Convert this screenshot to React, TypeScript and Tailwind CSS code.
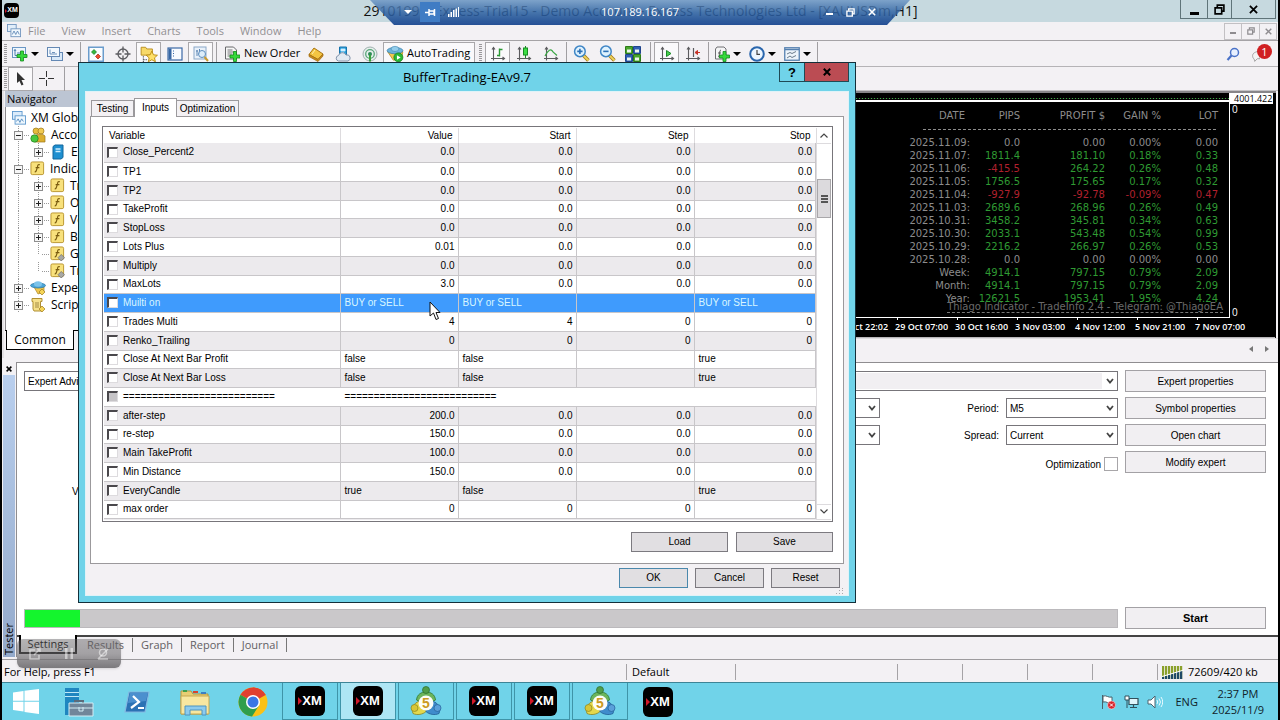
import type { ReactNode } from "react";
import clsx from "clsx";

type InputRow = {
  name: string;
  cells: [string, string, string, string];
  text?: boolean;
  selected?: boolean;
  disabled?: boolean;
};

const zeros = (name: string, value = "0.0"): InputRow => ({ name, cells: [value, "0.0", "0.0", "0.0"] });
const divider = "=".repeat(26);

const inputRows: InputRow[] = [
  zeros("Close_Percent2"),
  zeros("TP1"),
  zeros("TP2"),
  zeros("TakeProfit"),
  zeros("StopLoss"),
  zeros("Lots Plus", "0.01"),
  zeros("Multiply"),
  zeros("MaxLots", "3.0"),
  { name: "Muilti on", cells: ["BUY or SELL", "BUY or SELL", "", "BUY or SELL"], text: true, selected: true },
  { name: "Trades Multi", cells: ["4", "4", "0", "0"] },
  { name: "Renko_Trailing", cells: ["0", "0", "0", "0"] },
  { name: "Close At Next Bar Profit", cells: ["false", "false", "", "true"], text: true },
  { name: "Close At Next Bar Loss", cells: ["false", "false", "", "true"], text: true },
  { name: divider, cells: [divider, "", "", ""], text: true, disabled: true },
  zeros("after-step", "200.0"),
  zeros("re-step", "150.0"),
  zeros("Main TakeProfit", "100.0"),
  zeros("Min Distance", "150.0"),
  { name: "EveryCandle", cells: ["true", "false", "", "true"], text: true },
  { name: "max order", cells: ["0", "0", "0", "0"] },
];

const stats = [
  ["2025.11.09:", "0.0", "0.00", "0.00%", "0.00"],
  ["2025.11.07:", "1811.4", "181.10", "0.18%", "0.33"],
  ["2025.11.06:", "-415.5", "264.22", "0.26%", "0.48"],
  ["2025.11.05:", "1756.5", "175.65", "0.17%", "0.32"],
  ["2025.11.04:", "-927.9", "-92.78", "-0.09%", "0.47"],
  ["2025.11.03:", "2689.6", "268.96", "0.26%", "0.49"],
  ["2025.10.31:", "3458.2", "345.81", "0.34%", "0.63"],
  ["2025.10.30:", "2033.1", "543.48", "0.54%", "0.99"],
  ["2025.10.29:", "2216.2", "266.97", "0.26%", "0.53"],
  ["2025.10.28:", "0.0", "0.00", "0.00%", "0.00"],
  ["Week:", "4914.1", "797.15", "0.79%", "2.09"],
  ["Month:", "4914.1", "797.15", "0.79%", "2.09"],
  ["Year:", "12621.5", "1953.41", "1.95%", "4.24"],
];

const statColor = (row: string[], index: number) => {
  if (index === 0 || row[1] === "0.0") return "text-[#8c8c8c]";
  if (row[index].startsWith("-") || (index === 4 && row[2].startsWith("-"))) return "text-[#b0202e]";
  return "text-[#2f9a33]";
};

const timeAxis = ["28 Oct 22:02", "29 Oct 07:00", "30 Oct 16:00", "3 Nov 03:00", "4 Nov 12:00", "5 Nov 21:00", "7 Nov 07:00"];

/* ---------- toolbar icons, all on a 16px grid ---------- */

const Svg = ({ children, size = 16 }: { children: ReactNode; size?: number }) => (
  <svg width={size} height={size} viewBox="0 0 16 16" fill="none" className="shrink-0" aria-hidden="true">
    {children}
  </svg>
);

const Plus = ({ x = 10, y = 10 }) => (
  <path
    d={`M${x - 1.5} ${y - 5}h3v3.5h3.5v3h-3.5v3.5h-3v-3.5h-3.5v-3h3.5z`}
    fill="#35d83a"
    stroke="#128a1c"
    strokeWidth=".8"
  />
);

const NewChartIcon = () => (
  <Svg>
    <rect x=".5" y="1.5" width="13" height="10" fill="#eef6fd" stroke="#6a96c4" />
    <path d="M3 3.5v6h8M2 5l1-1.500 1 1.500M5 7h5" stroke="#4d7eb0" />
    <Plus x={10} y={10} />
  </Svg>
);
const WindowsIcon = () => (
  <Svg>
    <rect x="4.500" y="6.500" width="11" height="8" fill="#d7e8f8" stroke="#6488b4" />
    <rect x=".5" y="1.500" width="12" height="9" fill="#f2f8fe" stroke="#6488b4" />
    <path d="M3 3.500v4.500h7M5 6.500h3" stroke="#6e93bd" />
  </Svg>
);
const MarketIcon = () => (
  <Svg>
    <rect x=".75" y="1.250" width="14.500" height="14" fill="#fbfdff" stroke="#6a9ccc" strokeWidth="1.500" />
    <path d="M6 3.500l2.500 2.500L6 8.500 3.500 6z" fill="#33b83c" stroke="#177a20" strokeWidth=".7" />
    <path d="M10 8l2.500 2.500L10 13l-2.500-2.500z" fill="#ee4a2c" stroke="#a52510" strokeWidth=".7" />
  </Svg>
);
const TargetIcon = () => (
  <Svg>
    <circle cx="8" cy="8" r="5" stroke="#5c5c60" strokeWidth="1.300" />
    <path d="M8 .5v6M8 9.500v6M.5 8h6M9.500 8h6" stroke="#5c5c60" strokeWidth="1.300" />
  </Svg>
);
const FavoriteIcon = () => (
  <Svg size={18}>
    <path d="M1 2h4l1 1.500h5V9H1z" fill="#f7d968" stroke="#b58a1c" strokeWidth=".8" />
    <path d="M3 10v5M3 13h3" stroke="#555" strokeDasharray="1 1" />
    <path d="M10.500 5.500l1.500 3.200 3.500.4-2.600 2.300.8 3.500-3.200-1.800-3.100 1.800.7-3.500L5.500 9.100l3.500-.4z" fill="#ffe169" stroke="#b98a10" strokeWidth=".8" />
  </Svg>
);
const DataIcon = () => (
  <Svg>
    <rect x="1" y="2" width="14" height="12" fill="#f8fbff" stroke="#3c69a5" strokeWidth="1.200" />
    <path d="M1.500 2.500h3v11h-3z" fill="#3767a4" />
    <path d="M6 5h1M6 7.500h1M6 10h1" stroke="#3767a4" />
  </Svg>
);
const TesterIcon = () => (
  <Svg>
    <rect x="1" y="1" width="12" height="12" fill="#e9f1fa" stroke="#8aa8c8" />
    <path d="M4 4v6M3 5h2M6.500 3v5" stroke="#5c86b4" />
    <circle cx="9" cy="8" r="3.500" fill="#d9ecfa" fillOpacity=".8" stroke="#5d8dbd" />
    <path d="M11.500 11l3.500 4" stroke="#c89a30" strokeWidth="2" />
  </Svg>
);
const OrderIcon = () => (
  <Svg>
    <path d="M1.500 1h8l3 3v9h-11z" fill="#f6f6f6" stroke="#68686c" />
    <path d="M3.500 4h5M3.500 6h7M3.500 8h5M3.500 10h3" stroke="#77777b" />
    <Plus x={11} y={10.5} />
  </Svg>
);
const GoldIcon = () => (
  <Svg>
    <path d="M1 8.500L6 2l9 6-5 5.500z" fill="#f4c542" stroke="#a97514" />
    <path d="M1 8.500v2l9 5 5-5.500V8l-5 5.500z" fill="#c98e1c" stroke="#a06a10" strokeWidth=".7" />
    <path d="M4 8l3-4" stroke="#fff0b0" />
  </Svg>
);
const CloudIcon = () => (
  <Svg>
    <path d="M4.500 1h7v8h-7z" fill="#2ca0dc" stroke="#1673ac" />
    <path d="M6 3h4v2H6zM6 6.500h3" fill="#d6f0ff" stroke="#d6f0ff" strokeWidth=".8" />
    <path d="M3.500 15a2.800 2.800 0 010-5.500 4 4 0 017.500-.5 3 3 0 012 6z" fill="#e2e9f2" stroke="#8494ac" />
  </Svg>
);
const SignalIcon = () => (
  <Svg>
    <circle cx="8" cy="8" r="7" fill="#e6efec" stroke="#9fb0ae" />
    <circle cx="8" cy="8" r="4.300" stroke="#5aa579" strokeWidth="1.300" />
    <circle cx="8" cy="8" r="2" fill="#2f8b59" />
    <path d="M8 9v6.500" stroke="#39a338" strokeWidth="2" />
  </Svg>
);
const AutoIcon = () => (
  <Svg size={18}>
    <path d="M1.500 6l5 7.500 7-1L15 6z" fill="#f4c950" stroke="#b88a1e" strokeWidth=".7" />
    <ellipse cx="8" cy="5" rx="7" ry="2.800" fill="#6bb4dc" stroke="#3a80ac" strokeWidth=".7" />
    <ellipse cx="8" cy="3.500" rx="3.500" ry="2.300" fill="#92cdec" stroke="#3a80ac" strokeWidth=".5" />
    <circle cx="11" cy="11" r="4" fill="#2bb835" stroke="#15801c" strokeWidth=".7" />
    <path d="M9.700 9l3.300 2-3.300 2z" fill="#fff" />
  </Svg>
);
const Axes = () => <path d="M3.500 2v12.500M1 12.500h13M2 3.500l1.500-2L5 3.500M12.500 11l2 1.500-2 1.500" stroke="#5b5b5e" strokeWidth="1.100" />;
const BarsIcon = () => (
  <Svg>
    <Axes />
    <path d="M9.500 2.500v8M9.500 3.500h3M7 9.500h2.500" stroke="#2b9a35" strokeWidth="1.400" />
  </Svg>
);
const CandlesIcon = () => (
  <Svg>
    <Axes />
    <path d="M9.500 0v12" stroke="#188c22" />
    <rect x="7.500" y="2" width="4" height="7" fill="#3ddd46" stroke="#188c22" />
  </Svg>
);
const LineIcon = () => (
  <Svg>
    <Axes />
    <path d="M2 10c3-6 6-8 8-4l4 3.500" stroke="#3aa544" strokeWidth="1.200" />
  </Svg>
);
const ZoomIcon = ({ plus = false }) => (
  <Svg size={17}>
    <path d="M9.500 9.500l5 5" stroke="#a87e1c" strokeWidth="3.400" />
    <path d="M10 10l4.500 4.500" stroke="#eed45c" strokeWidth="1.800" />
    <circle cx="6.500" cy="6" r="5" fill="#dff2fe" stroke="#3f86c6" strokeWidth="1.400" />
    <path d={plus ? "M4 6h5M6.500 3.500v5" : "M4 6h5"} stroke="#2c70b6" strokeWidth="1.500" />
  </Svg>
);
const TileIcon = () => (
  <Svg>
    <path d="M.5.500h7v7h-7zM8.500 8.500h7v7h-7z" fill="#4aa62c" stroke="#2c7a18" />
    <path d="M8.500.500h7v7h-7zM.5 8.500h7v7h-7z" fill="#2f5fb4" stroke="#20448c" />
    <path d="M2 3.500h4v3H2zM10 3.500h4v3h-4zM2 11.500h4v3H2zM10 11.500h4v3h-4z" fill="#eef6ee" />
  </Svg>
);
const ScrollIcon = () => (
  <Svg>
    <Axes />
    <path d="M7.500 4.500l4.500 3-4.500 3z" fill="#46cf4c" stroke="#1c8a26" />
  </Svg>
);
const ShiftIcon = () => (
  <Svg>
    <Axes />
    <path d="M8.500 2v9" stroke="#5b5b5e" strokeWidth="1.200" />
    <path d="M15 6.500h-4M12.500 4.500l-2.500 2 2.500 2z" fill="#c73226" stroke="#c73226" />
  </Svg>
);
const IndicatorIcon = () => (
  <Svg>
    <path d="M3 1h7l2 2v10H1.500V3z" fill="#f5f5f6" stroke="#707074" />
    <path d="M7 4c-2 0-1 7-3 7M4 7h3" stroke="#555" />
    <Plus x={10.5} y={10.5} />
  </Svg>
);
const ClockIcon = () => (
  <Svg>
    <circle cx="8" cy="8" r="6.800" fill="#edf6ff" stroke="#2a66ad" strokeWidth="2" />
    <path d="M8 4v4.300h3" stroke="#444" strokeWidth="1.200" />
  </Svg>
);
const TemplateIcon = () => (
  <Svg>
    <rect x=".75" y="1.750" width="14.500" height="12.500" fill="#eef4fa" stroke="#5580b0" strokeWidth="1.300" />
    <path d="M1 3.500h14" stroke="#5580b0" strokeWidth="1.500" />
    <path d="M3 8l3-1.500 2 1 4-2M3 12l3-2 2 1.500 4-2" stroke="#6a7b8c" />
  </Svg>
);

const Caret = ({ light }: { light?: boolean }) => (
  <span className={clsx("border-x-4 border-t-4 border-x-transparent", light ? "border-t-white" : "border-t-black")} />
);
const Grip = () => <span className="h-5 w-[3px] shrink-0 bg-[repeating-linear-gradient(#9a989b_0_1px,#f3f1f4_1px_2px)]" />;
const Sep = ({ className }: { className: string }) => (
  <span className={clsx("flex shrink-0 justify-center", className)}>
    <span className="h-6 w-px bg-[#a09ea1]" />
  </span>
);

const ToolButton = ({ label, pressed, narrow, children }: { label: string; pressed?: boolean; narrow?: boolean; children: ReactNode }) => (
  <button
    type="button"
    aria-label={label}
    className={clsx(
      "flex h-6 shrink-0 items-center justify-center",
      pressed ? "w-[25px] border border-[#a9a7aa] bg-[#faf9fb]" : narrow ? "w-[26px]" : "w-[27px]",
    )}
  >
    {children}
  </button>
);

const DropButton = ({ label, children }: { label: string; children: ReactNode }) => (
  <button type="button" aria-label={label} className="flex h-6 w-[35px] shrink-0 items-center gap-[3px] pl-1">
    {children}
    <Caret />
  </button>
);

/* ---------- main window ---------- */

const MinGlyph = () => <span className="mt-2 h-[3px] w-[9px] bg-black" />;
const RestoreGlyph = ({ color = "#000", size = 11 }) => (
  <svg width={size} height={size} viewBox="0 0 10 10" fill="none" stroke={color} strokeWidth="1.500" aria-hidden="true">
    <path d="M3 3V1h6v5.500H7" />
    <path d="M1 3.500h6V9H1z" />
  </svg>
);
const CloseGlyph = ({ color = "#000", size = 9, weight = 2 }) => (
  <svg width={size} height={size} viewBox="0 0 10 10" stroke={color} strokeWidth={weight} aria-hidden="true">
    <path d="M1 1l8 8M9 1L1 9" />
  </svg>
);

const TitleBar = () => (
  <header className="relative flex h-[22px] shrink-0 items-start bg-[#c6d9df]">
    <XmLogo small />
    <h1 className="flex-1 self-center pr-4 text-center font-['Open_Sans',sans-serif] text-[14px] leading-5 whitespace-nowrap text-[#111]">
      29101990: Exness-Trial15 - Demo Account - Exness Technologies Ltd - [XAUUSDm,H1]
    </h1>
    <div className="absolute top-0 right-[2px] flex h-[19px] border border-t-0 border-[#5f7479]">
      <button type="button" aria-label="Minimize" className="flex w-[27px] items-center justify-center border-r border-[#5f7479]"><MinGlyph /></button>
      <button type="button" aria-label="Restore" className="flex w-6 items-center justify-center border-r border-[#5f7479]"><RestoreGlyph /></button>
      <button type="button" aria-label="Close" className="flex w-[43px] items-center justify-center"><CloseGlyph /></button>
    </div>
  </header>
);

const MenuBar = () => (
  <nav className="flex h-[19px] shrink-0 items-center border-b border-[#a5a3a6] bg-[#f3f1f4] pl-[5px] text-[#929093]">
    <Svg size={14}>
      <rect x=".5" y=".5" width="10" height="8" fill="#e2eefa" stroke="#6f93bd" />
      <rect x="4.500" y="5.500" width="11" height="9" fill="#f0f7fd" stroke="#6f93bd" />
      <path d="M6 12l2-4 2 4 2-4 2 4" stroke="#5f87b5" />
    </Svg>
    <div className="flex flex-1 gap-4 pl-[7px] text-[11px] leading-4">
      {["File", "View", "Insert", "Charts", "Tools", "Window", "Help"].map((item) => (
        <button key={item} type="button">{item}</button>
      ))}
    </div>
    <div className="mr-px flex h-[17px] border border-[#c2c0c3]">
      <button type="button" aria-label="Minimize chart" className="flex w-[17px] items-center justify-center border-r border-[#c2c0c3]">
        <span className="mt-1 h-[2px] w-[6px] bg-[#8e8c8f]" />
      </button>
      <button type="button" aria-label="Restore chart" className="flex w-[18px] items-center justify-center border-r border-[#c2c0c3]"><RestoreGlyph color="#8e8c8f" size={8} /></button>
      <button type="button" aria-label="Close chart" className="flex w-4 items-center justify-center"><CloseGlyph color="#8e8c8f" size={7} /></button>
    </div>
  </nav>
);

const Toolbars = () => (
  <div className="shrink-0 bg-[#f3f1f4]">
    <div className="flex h-[26px] items-center border-b border-[#b5b3b6]">
      <div className="flex w-[6px] justify-center"><Grip /></div>
      <DropButton label="New chart"><NewChartIcon /></DropButton>
      <DropButton label="Profiles"><WindowsIcon /></DropButton>
      <Sep className="w-1" />
      <ToolButton label="Market watch"><MarketIcon /></ToolButton>
      <ToolButton label="Data window"><TargetIcon /></ToolButton>
      <ToolButton label="Navigator" pressed><FavoriteIcon /></ToolButton>
      <ToolButton label="Terminal"><DataIcon /></ToolButton>
      <ToolButton label="Strategy tester" pressed><TesterIcon /></ToolButton>
      <Sep className="w-[7px]" />
      <button type="button" className="flex h-6 w-[82px] shrink-0 items-center gap-1 pl-1 text-[11px] whitespace-nowrap">
        <OrderIcon />
        New Order
      </button>
      <ToolButton label="MetaEditor"><GoldIcon /></ToolButton>
      <ToolButton label="Hosting"><CloudIcon /></ToolButton>
      <ToolButton label="Signals"><SignalIcon /></ToolButton>
      <button type="button" className="flex h-6 w-[92px] shrink-0 items-center gap-[3px] border border-[#a9a7aa] bg-[#faf9fb] pl-[2px] text-[11px]">
        <AutoIcon />
        AutoTrading
      </button>
      <div className="flex w-[10px] justify-center"><Grip /></div>
      <ToolButton label="Bar chart" pressed><BarsIcon /></ToolButton>
      <ToolButton label="Candlesticks"><CandlesIcon /></ToolButton>
      <ToolButton label="Line chart"><LineIcon /></ToolButton>
      <Sep className="w-1" />
      <ToolButton label="Zoom in" narrow><ZoomIcon plus /></ToolButton>
      <ToolButton label="Zoom out" narrow><ZoomIcon /></ToolButton>
      <ToolButton label="Tile windows" narrow><TileIcon /></ToolButton>
      <Sep className="w-2" />
      <ToolButton label="Auto scroll" pressed><ScrollIcon /></ToolButton>
      <ToolButton label="Chart shift"><ShiftIcon /></ToolButton>
      <Sep className="w-1" />
      <DropButton label="Indicators"><IndicatorIcon /></DropButton>
      <DropButton label="Periods"><ClockIcon /></DropButton>
      <DropButton label="Templates"><TemplateIcon /></DropButton>
      <Sep className="w-1" />
      <div className="ml-auto flex items-center gap-3 pr-[6px]">
        <button type="button" aria-label="Search">
          <svg width="14" height="14" viewBox="0 0 14 14" fill="none" aria-hidden="true">
            <circle cx="8.500" cy="5.500" r="4" fill="#e8f0ff" stroke="#4a72c8" strokeWidth="1.500" />
            <path d="M5.500 8.500l-4 4.500" stroke="#4a72c8" strokeWidth="2.200" />
          </svg>
        </button>
        <button type="button" aria-label="Notifications" className="flex items-end">
          <svg width="8" height="13" viewBox="0 0 9 13" className="-mr-[3px]" aria-hidden="true">
            <path d="M6 1C1 2 0 5 1 7.500c1 2 2 2 2 4.500l3-3h3V1z" fill="#f4f4f4" stroke="#9b9b9b" />
          </svg>
          <span className="mb-1 size-[15px] rounded-full bg-[#d02022] text-center text-[11px] leading-[15px] text-white">1</span>
        </button>
      </div>
    </div>
    <div className="flex h-6 items-center border-b border-[#c5c3c6]">
      <div className="flex w-[6px] justify-center"><Grip /></div>
      <ToolButton label="Cursor" pressed>
        <svg width="10" height="14" viewBox="0 0 10 14" aria-hidden="true">
          <path d="M1 0v11l2.500-2 2 4.500 2-1L5.500 8H9z" fill="#333" />
        </svg>
      </ToolButton>
      <ToolButton label="Crosshair">
        <svg width="15" height="15" viewBox="0 0 15 15" stroke="#333" aria-hidden="true">
          <path d="M7.500 0v6M7.500 9v6M0 7.500h6M9 7.500h6" />
        </svg>
      </ToolButton>
      <Sep className="w-2" />
    </div>
  </div>
);

/* ---------- navigator ---------- */

const FnIcon = ({ script = false }) => (
  <Svg size={15}>
    <rect x="1" y="1" width="13.500" height="13.500" rx="1.500" fill="#f8e17c" stroke="#b9932c" />
    <path d="M10.500 4c-3-1-2 2-3 4s-.5 4-2.500 3.500M6 7h4" stroke="#7a5c10" strokeWidth="1.200" />
    {script && <path d="M12 9l3.500 3.500L12 16l-3.500-3.500z" fill="#a8a8a4" stroke="#666" strokeWidth=".7" />}
  </Svg>
);
const AccountsIcon = () => (
  <Svg>
    <circle cx="6" cy="4" r="3" fill="#e6bc3c" stroke="#9b761a" strokeWidth=".7" />
    <circle cx="11" cy="4" r="3" fill="#f1cb52" stroke="#9b761a" strokeWidth=".7" />
    <path d="M5 15V9c2-2.500 8-2.500 10 0v6z" fill="#dcae2e" stroke="#9b761a" strokeWidth=".7" />
    <circle cx="4.500" cy="11.500" r="3.700" fill="#49c83e" stroke="#23801e" strokeWidth=".7" />
  </Svg>
);
const ServerIcon = () => (
  <Svg>
    <path d="M3 2.500L5 1h8v12.500L11 15H3z" fill="#1f8fd0" stroke="#12669c" />
    <path d="M5.500 5h5M5.500 7.500h5" stroke="#cdeeff" strokeWidth="1.300" />
  </Svg>
);
const ExpertsIcon = () => (
  <Svg>
    <path d="M4 7l4 7 6-2V7z" fill="#f1c84c" stroke="#ad8424" strokeWidth=".7" />
    <ellipse cx="8" cy="5.500" rx="7.500" ry="2.500" fill="#4ba5d8" stroke="#2a75a5" strokeWidth=".7" />
    <ellipse cx="8" cy="4" rx="4" ry="2.700" fill="#7cc3ea" />
    <path d="M12 9l3 3-3 3-3-3z" fill="#f6d558" stroke="#9c7a1c" strokeWidth=".7" />
  </Svg>
);
const ScriptsIcon = () => (
  <Svg>
    <path d="M2 1.500h10v3h-1.500V12l1.500 2H4l-1-2V4.500H2z" fill="#f6e08a" stroke="#b08f32" />
    <path d="M5 6h4M5 8h4M5 10h4" stroke="#a38a44" />
    <path d="M12 9l3 3-3 3-3-3z" fill="#f6d558" stroke="#9c7a1c" strokeWidth=".7" />
  </Svg>
);

const tree: { label: string; level: number; mark?: string; icon: ReactNode }[] = [
  { label: "Accounts", level: 1, mark: "-", icon: <AccountsIcon /> },
  { label: "Exness", level: 2, mark: "+", icon: <ServerIcon /> },
  { label: "Indicators", level: 1, mark: "-", icon: <FnIcon /> },
  { label: "Trend", level: 2, mark: "+", icon: <FnIcon /> },
  { label: "Osc", level: 2, mark: "+", icon: <FnIcon /> },
  { label: "Vol", level: 2, mark: "+", icon: <FnIcon /> },
  { label: "Bill", level: 2, mark: "+", icon: <FnIcon /> },
  { label: "G", level: 2, icon: <FnIcon script /> },
  { label: "Trade", level: 2, icon: <FnIcon script /> },
  { label: "Experts", level: 1, mark: "+", icon: <ExpertsIcon /> },
  { label: "Scripts", level: 1, mark: "+", icon: <ScriptsIcon /> },
];

const Expander = ({ mark }: { mark?: string }) => (
  <svg width="16" height="17" viewBox="0 0 16 17" fill="none" className="shrink-0" aria-hidden="true">
    <path d={mark ? "M4.500 0v5" : "M4.500 0v9"} stroke="#999" strokeDasharray="1 1" />
    {mark && <path d="M4.500 13v4" stroke="#999" strokeDasharray="1 1" />}
    <path d="M8 9.500h7" stroke="#999" strokeDasharray="1 1" />
    {mark && <rect x=".5" y="5.500" width="8" height="8" fill="#f6f6f6" stroke="#8e8e8e" />}
    {mark && <path d={mark === "+" ? "M2 9.500h5M4.500 7v5" : "M2 9.500h5"} stroke="#222" />}
  </svg>
);

const Navigator = () => (
  <aside className="flex w-[200px] shrink-0 flex-col overflow-hidden border-l-2 border-[#e4e2e5] bg-[#f3f1f4] pl-px">
    <h2 className="h-4 bg-[#bcc5d3] pl-[2px] text-[11px] leading-4">Navigator</h2>
    <div className="flex-1 border-l border-[#8a888b] bg-white pt-[2px] pl-[6px] text-[12px] whitespace-nowrap">
      <div className="flex h-[17px] items-center gap-[5px]">
        <Svg size={14}>
          <rect x=".5" y=".5" width="11" height="9" fill="#dcecfb" stroke="#5a96cc" />
          <rect x="3.500" y="5.500" width="12" height="9.500" fill="#f0f8fe" stroke="#5a96cc" />
          <path d="M5 12l2-3 2 4 2-4 2 3" stroke="#4b86bc" />
        </Svg>
        XM Global
      </div>
      {tree.map((node) => (
        <div key={node.label} className={clsx("flex h-[17px] items-center", node.level === 1 ? "pl-[2px]" : "ml-[6px] border-l border-dotted border-[#999] pl-[15px]")}>
          <Expander mark={node.mark} />
          {node.icon}
          <span className="pl-[5px]">{node.label}</span>
        </div>
      ))}
    </div>
    <div className="flex h-7 items-start border-t border-black bg-[#f3f1f4] pl-px">
      <button type="button" className="-mt-px h-5 w-[68px] border border-t-0 border-black bg-white pt-px text-[12px] leading-4">Common</button>
    </div>
  </aside>
);

/* ---------- chart ---------- */

const StatsTable = () => (
  <table className="ml-auto table-fixed text-right font-['DejaVu_Sans',sans-serif] text-[10px] leading-[13px]">
    <thead className="text-[#8c8c8c]">
      <tr className="[&>th]:h-[13px] [&>th]:font-normal">
        <th className="w-[75px] pr-[5px]">DATE</th>
        <th className="w-[50px]">PIPS</th>
        <th className="w-[85px]">PROFIT $</th>
        <th className="w-[56px]">GAIN %</th>
        <th className="w-[57px]">LOT</th>
      </tr>
      <tr>
        <td colSpan={5} className="h-[14px]">
          <div className="ml-auto h-px w-[295px] bg-[repeating-linear-gradient(90deg,#8c8c8c_0_3px,transparent_3px_5px)]" />
        </td>
      </tr>
    </thead>
    <tbody>
      {stats.map((row) => (
        <tr key={row[0]}>
          {row.map((cell, i) => (
            <td key={i} className={statColor(row, i)}>{cell}</td>
          ))}
        </tr>
      ))}
    </tbody>
  </table>
);

const Chart = () => (
  <main className="flex min-w-0 flex-1 flex-col">
    <div className="mr-[2px] flex flex-1 flex-col border-t-2 border-[#88868a] bg-black pr-px">
      <div className="flex flex-1">
        <div className="relative min-w-0 flex-1 border-r border-b border-white pr-[11px]">
          <div className="-mr-[11px] h-[9px] border-b-2 border-white pt-[5px]">
            <div className="h-px bg-[repeating-linear-gradient(90deg,#3fae48_0_1px,#111_1px_3px)]" />
          </div>
          <div className="pt-[7px]"><StatsTable /></div>
          <p className="absolute right-[6px] bottom-1 border-b border-dashed border-[#777] font-['DejaVu_Sans',sans-serif] text-[10px] leading-[10px] whitespace-nowrap text-[#6a6a6a]">
            Thiago Indicator - TradeInfo 2.4 - Telegram: @ThiagoEA
          </p>
        </div>
        <div className="flex w-[45px] shrink-0 flex-col font-['Open_Sans',sans-serif] text-[10px] leading-3 text-white">
          <span className="mr-[2px] h-[11px] bg-white pl-1 text-[9px] leading-[11px] text-black">4001.422</span>
          <span className="pl-[2px] leading-[10px]">0</span>
          <span className="mt-auto pl-[2px]">0</span>
        </div>
      </div>
      <div className="flex h-5 justify-end overflow-hidden border-b border-[#b9b7ba] pr-[20px] text-[9px] leading-[14px] font-semibold text-white">
        {timeAxis.map((t) => (
          <span key={t} className="flex w-[60px] shrink-0 flex-col whitespace-nowrap">
            <span className="ml-[2px] h-[2px] w-px bg-white" />
            {t}
          </span>
        ))}
      </div>
    </div>
    <div className="flex h-5 items-center justify-end gap-3 border-t border-[#dddbde] bg-[#f3f1f4] pr-[9px]">
      <span className="border-y-[3px] border-r-4 border-y-transparent border-r-[#777]" />
      <span className="border-y-[3px] border-l-4 border-y-transparent border-l-[#777]" />
    </div>
  </main>
);

/* ---------- strategy tester ---------- */

const Select = ({ id, label, value, className, grey }: { id: string; label?: string; value: string; className: string; grey?: boolean }) => (
  <div className={clsx("relative h-5", className)}>
    <select id={id} aria-label={label} defaultValue={value} className={clsx("h-full w-full appearance-none border border-[#77757a] px-[3px] text-[10px] text-black", grey ? "bg-[#f1eff2] shadow-[inset_0_0_0_1px_#fff]" : "bg-white")}>
      <option>{value}</option>
    </select>
    <span className="pointer-events-none absolute top-px right-px flex h-[18px] w-[15px] items-center justify-center bg-white">
      <svg width="8" height="6" viewBox="0 0 8 6" fill="none" stroke="#444" strokeWidth="1.800" aria-hidden="true"><path d="M1 1l3 3.500L7 1" /></svg>
    </span>
  </div>
);

const SideButton = ({ children, bold }: { children: ReactNode; bold?: boolean }) => (
  <button type="button" className={clsx("h-[22px] w-[141px] shrink-0 border border-[#a3a1a5] bg-[#f1eff2]", bold && "text-[11px] font-bold")}>
    {children}
  </button>
);

const Tester = () => (
  <section className="flex h-[302px] shrink-0 border-b border-[#9d9b9e] bg-[#f3f1f4] pt-1 pb-[2px]">
    <div className="flex w-[14px] shrink-0 flex-col items-center">
      <button type="button" aria-label="Close tester" className="flex h-[13px] items-center"><CloseGlyph size={6} weight={2.5} /></button>
      <div className="flex w-3 flex-1 items-center bg-linear-to-b from-[#b9cfee] to-[#94aacb] pb-[2px] [writing-mode:vertical-rl]">
        <span className="mt-auto rotate-180 text-[11px] leading-3">Tester</span>
      </div>
    </div>
    <div className="flex min-w-0 flex-1 flex-col border-t border-l border-[#8f8d90]">
      <div className="flex flex-1 flex-col gap-[5px] bg-white pt-[7px] pr-3 pb-[6px] pl-[7px] font-['Liberation_Sans',Arial,sans-serif] text-[10px]">
        <div className="flex items-center gap-[7px]">
          <Select id="type" label="Test type" value="Expert Advisor" className="w-[100px]" />
          <Select id="expert" label="Expert" value="" className="flex-1" grey />
          <SideButton>Expert properties</SideButton>
        </div>
        <div className="flex items-center">
          <label htmlFor="symbol" className="w-[100px] text-right">Symbol:</label>
          <Select id="symbol" value="XAUUSDm" className="ml-[7px] flex-1" />
          <label htmlFor="period" className="w-[126px] pr-[7px] text-right">Period:</label>
          <Select id="period" value="M5" className="mr-[7px] w-28" />
          <SideButton>Symbol properties</SideButton>
        </div>
        <div className="flex items-center">
          <label htmlFor="model" className="w-[100px] text-right">Model:</label>
          <Select id="model" value="Every tick" className="ml-[7px] flex-1" />
          <label htmlFor="spread" className="w-[126px] pr-[7px] text-right">Spread:</label>
          <Select id="spread" value="Current" className="mr-[7px] w-28" />
          <SideButton>Open chart</SideButton>
        </div>
        <div className="flex items-center justify-end">
          <label htmlFor="optimization" className="pt-1 pr-[3px]">Optimization</label>
          <input id="optimization" type="checkbox" className="mt-1 mr-[7px] size-[14px] appearance-none border border-[#a8a6a9] bg-white" />
          <SideButton>Modify expert</SideButton>
        </div>
        <div className="flex h-[26px] items-center pl-12">Visual mode</div>
        <div className="mt-auto flex items-center gap-[7px]">
          <div role="progressbar" aria-label="Test progress" aria-valuenow={5} className="h-[19px] flex-1 border border-[#bbb9bc] bg-[#cac8ca]">
            <div className="h-full w-[5%] bg-[#14f52d]" />
          </div>
          <SideButton bold>Start</SideButton>
        </div>
      </div>
      <div className="flex h-[22px] items-start border-t-2 border-[#444] pl-[2px] text-[11px] leading-4 text-[#626063]">
        <button type="button" className="-mt-[2px] mr-[2px] h-[19px] w-[58px] border-r-2 border-b-2 border-l-2 border-black bg-white text-black">Settings</button>
        {["Results", "Graph", "Report", "Journal"].map((tab) => (
          <button key={tab} type="button" className="mt-px border-r border-[#777] px-2 leading-[14px]">{tab}</button>
        ))}
      </div>
    </div>
  </section>
);

const StatusBar = () => (
  <footer className="flex h-[22px] shrink-0 items-center bg-[#f3f1f4] pt-[2px] text-[11px] leading-4 whitespace-nowrap">
    <span className="flex-1 pl-[2px]">For Help, press F1</span>
    <span className="w-[109px] border-l border-[#a5a3a6] pl-[5px]">Default</span>
    <span className="h-4 w-[162px] border-l border-[#a5a3a6]" />
    {[0, 1, 2, 3].map((n) => (
      <span key={n} className="h-4 w-[65px] border-l border-[#a5a3a6]" />
    ))}
    <span className="flex w-[121px] items-center gap-1 border-l border-[#a5a3a6] pl-1">
      <svg width="22" height="13" viewBox="0 0 22 13" aria-hidden="true">
        {[0, 3, 6, 9, 12, 15, 18].map((x) => (
          <g key={x}>
            <rect x={x} y="0" width="2.200" height="13" fill="#8aa02c" />
            <rect x={x} y={11 - x / 3} width="2.200" height={2 + x / 3} fill="#1f4a66" />
          </g>
        ))}
        <path d="M0 10.500L22 4" stroke="#fff" />
      </svg>
      72609/420 kb
    </span>
  </footer>
);

/* ---------- taskbar ---------- */

const XmLogo = ({ small }: { small?: boolean }) => (
  <span
    className={clsx(
      "flex shrink-0 items-center justify-center bg-black font-['Liberation_Sans',Arial,sans-serif] font-bold text-white",
      small ? "mt-[3px] ml-[2px] size-[15px] rounded-sm text-[7px]" : "size-[30px] rounded-md text-[13px]",
    )}
  >
    <span className={clsx("border-y-transparent border-l-[#d01828]", small ? "border-y-2 border-l-2" : "border-y-4 border-l-4")} />
    XM
  </span>
);

const Mt5Logo = () => (
  <svg width="32" height="30" viewBox="0 0 32 30" aria-hidden="true">
    <path d="M6.500 14C7 8.500 11 6 16 6s9 2.500 9.500 8l-4 2h-11z" fill="#6cb55c" stroke="#2e7a34" strokeWidth=".8" />
    <circle cx="16" cy="4" r="3.500" fill="#4f9e4a" stroke="#2b6c2c" strokeWidth=".7" />
    <path d="M3 27.500c-2-5 1-11 6-12l7 10c-3 3-9 4-13 2z" fill="#e4d84c" stroke="#8d8420" strokeWidth=".8" />
    <circle cx="4.500" cy="22" r="3.500" fill="#d8c636" stroke="#8d8420" strokeWidth=".7" />
    <path d="M29 27.500c2-5-1-11-6-12l-7 10c3 3 9 4 13 2z" fill="#3f8ccc" stroke="#1f5c94" strokeWidth=".8" />
    <circle cx="27.500" cy="22" r="3.500" fill="#5aa0da" stroke="#24609a" strokeWidth=".7" />
    <circle cx="16" cy="17" r="7.500" fill="#fdfdf8" />
    <text x="16" y="22" textAnchor="middle" fontSize="14" fontWeight="bold" fill="#cc9a20" fontFamily="Liberation Sans, Arial, sans-serif">5</text>
  </svg>
);

const apps = ["xm", "xm-active", "mt5", "xm", "xm", "mt5", "xm-plain"];

const Taskbar = () => (
  <div className="flex h-[38px] shrink-0 border-t border-[#3d8496] bg-[#70d3e9]">
    <button type="button" aria-label="Start menu" className="flex w-12 items-center justify-center">
      <svg width="26" height="25" viewBox="0 0 26 25" fill="#fff" aria-hidden="true">
        <path d="M0 3.500L10.500 2v9.800H0zM11.500 1.800L26 0v11.800H11.500zM0 12.800h10.500v9.800L0 21zM11.500 12.800H26V25l-14.500-2z" />
      </svg>
    </button>
    <button type="button" aria-label="Server Manager" className="flex w-[58px] items-center justify-center">
      <svg width="30" height="30" viewBox="0 0 30 30" fill="none" aria-hidden="true">
        <path d="M1 1h14v27H1z" fill="#1f86c0" />
        <path d="M1 5.500h14M1 9.500h14" stroke="#bfe8f6" />
        <path d="M11 17v-3h8v3" stroke="#5a6c7c" strokeWidth="2" />
        <path d="M5 16h24v13H5z" fill="#71869a" stroke="#d4edf5" />
        <path d="M5 21h24M15 20v4h4v-4" stroke="#d4edf5" />
      </svg>
    </button>
    <button type="button" aria-label="PowerShell" className="flex w-[58px] items-center justify-center">
      <svg width="26" height="22" viewBox="0 0 26 22" fill="none" aria-hidden="true">
        <path d="M5 1h20l-4 20H1z" fill="#2b72b4" stroke="#84b8e2" strokeWidth="1.200" />
        <path d="M6 2h18l-2 8L4 12z" fill="#4b8fce" />
        <path d="M9 5l6 6-8 6M14 17h6" stroke="#fff" strokeWidth="2.200" />
      </svg>
    </button>
    <button type="button" aria-label="File Explorer" className="flex w-[58px] items-center justify-center">
      <svg width="30" height="28" viewBox="0 0 30 28" aria-hidden="true">
        <path d="M1 3h10l2 3h15v20H1z" fill="#e8ce74" stroke="#b39642" />
        <path d="M3 2h4v2H3z" fill="#3ea04c" />
        <path d="M13 3h5v2h-5z" fill="#d8452c" />
        <path d="M21 4h5v2h-5z" fill="#3c80c4" />
        <path d="M1 8h28v18H1z" fill="#f8e7a0" stroke="#c6a850" />
        <path d="M5 27v-9h21v9h-4v-5H10v5z" fill="#8ccbee" stroke="#4c94c0" />
      </svg>
    </button>
    <button type="button" aria-label="Chrome" className="flex w-[58px] items-center justify-center">
      <svg width="30" height="30" viewBox="0 0 30 30" aria-hidden="true">
        <circle cx="15" cy="15" r="14.500" fill="#fbc116" />
        <path d="M15 15L2.500 7.700A14.500 14.500 0 0127.600 8z" fill="#e0402f" />
        <path d="M15 .5a14.500 14.500 0 0112.600 7.500H15z" fill="#e0402f" />
        <path d="M2.500 7.700A14.500 14.500 0 0014 29.500l7-11L15 15z" fill="#2f9e4c" />
        <circle cx="15" cy="15" r="7" fill="#fff" />
        <circle cx="15" cy="15" r="5.500" fill="#3a76e4" />
      </svg>
    </button>
    <div className="flex gap-[2px]">
      {apps.map((app, i) => (
        <button
          key={i}
          type="button"
          aria-label={app === "mt5" ? "MetaTrader 5" : "XM terminal"}
          className={clsx(
            "flex w-14 items-center justify-center",
            app !== "xm-plain" && "border-x border-b border-[#3f94a8]",
            app === "xm-active" && "bg-[#aee6f4]",
          )}
        >
          {app === "mt5" ? <Mt5Logo /> : <XmLogo />}
        </button>
      ))}
    </div>
    <div className="ml-auto flex items-center gap-2 pr-[14px] text-[11px] leading-4 text-[#10222a]">
      <svg width="15" height="16" viewBox="0 0 15 16" aria-hidden="true">
        <path d="M1.500 1v14" stroke="#48606a" />
        <path d="M2 2c4-1 5 2 9 1v6c-4 1-5-2-9-1z" fill="#fff" stroke="#48606a" />
        <circle cx="10.500" cy="11" r="4" fill="#d8232c" stroke="#fff" strokeWidth=".5" />
        <path d="M9 9.500l3 3M12 9.500l-3 3" stroke="#fff" />
      </svg>
      <svg width="15" height="14" viewBox="0 0 15 14" fill="none" aria-hidden="true">
        <path d="M5 3.500h9v6H5zM9.500 10v2.500M6 12.500h7" fill="#dff4fa" stroke="#31505c" strokeWidth="1.200" />
        <path d="M1 1h4v4H1zM3 5v8" fill="#fff" stroke="#31505c" />
      </svg>
      <svg width="16" height="14" viewBox="0 0 16 14" fill="none" aria-hidden="true">
        <path d="M1 5h3l4-4v12L4 9H1z" fill="#fff" stroke="#4b6470" />
        <path d="M10 5q1.500 2 0 4M12 3.500q3 3.500 0 7M14 2q3.500 5 0 10" stroke="#eafaff" />
      </svg>
      <span className="ml-1">ENG</span>
      <time className="ml-[6px] text-center">
        2:37 PM
        <br />
        2025/11/9
      </time>
    </div>
  </div>
);

/* ---------- overlays ---------- */

const RemoteBar = () => (
  <div className="absolute top-0 left-1/2 z-20 flex h-[25px] w-[540px] -translate-x-1/2 items-center bg-linear-to-b from-[#6b95c4]/80 via-[#2f62a2]/85 to-[#1a4790]/95 pb-px text-[11px] text-white [clip-path:polygon(0_0,100%_0,517px_100%,24px_100%)]">
    <div className="flex flex-1 items-center gap-2 pl-[34px]">
      <Caret light />
      <span className="flex h-5 w-5 items-center justify-center bg-[#3f7cc4]">
        <svg width="11" height="9" viewBox="0 0 11 9" fill="none" stroke="#fff" strokeWidth="1.500" aria-hidden="true"><path d="M0 4.500h4M4 1v7M4 3h5v3H4M9.500 1v7" /></svg>
      </span>
      <svg width="11" height="10" viewBox="0 0 11 10" fill="#fff" aria-hidden="true"><path d="M0 7h1.500v3H0zM2.500 5H4v5H2.500zM5 3h1.500v7H5zM7.500 1.500H9V10H7.500zM10 0h1v10h-1z" /></svg>
    </div>
    <span>107.189.16.167</span>
    <div className="flex flex-1 items-center justify-end gap-[13px] pr-[34px]">
      <button type="button" aria-label="Minimize session" className="mt-1 h-[2px] w-[7px] bg-white" />
      <button type="button" aria-label="Restore session"><RestoreGlyph color="#fff" size={9} /></button>
      <button type="button" aria-label="Close session"><CloseGlyph color="#fff" size={8} /></button>
    </div>
  </div>
);

const RecorderBar = () => (
  <div className="absolute bottom-[52px] left-[15px] z-20 flex h-[29px] w-[104px] items-center justify-around rounded-md bg-linear-to-b from-[#5a585b]/45 via-[#6e6c6f]/60 to-[#757376]/95 text-white/50 shadow-sm">
    <button type="button" aria-label="Edit recording">
      <svg width="12" height="12" viewBox="0 0 12 12" fill="none" stroke="currentColor" strokeWidth="1.500" aria-hidden="true"><path d="M6 2H1v9h9V7M5 7l6-6M8 1h3v3" /></svg>
    </button>
    <button type="button" aria-label="Pause recording">
      <svg width="8" height="11" viewBox="0 0 8 11" fill="currentColor" aria-hidden="true"><path d="M0 0h2.500v11H0zM5.500 0H8v11H5.500z" /></svg>
    </button>
    <button type="button" aria-label="Camera off">
      <svg width="12" height="12" viewBox="0 0 12 12" fill="none" stroke="currentColor" strokeWidth="1.500" aria-hidden="true"><circle cx="6" cy="4.500" r="3.500" /><path d="M1 11h10M1 11L11 1" /></svg>
    </button>
  </div>
);

const DialogButton = ({ children, wide, primary }: { children: ReactNode; wide?: boolean; primary?: boolean }) => (
  <button
    type="button"
    className={clsx("h-5 border bg-[#e1dfe2]", wide ? "w-[97px]" : "w-[69px]", primary ? "border-[#4a88ac]" : "border-[#7c7a80]")}
  >
    {children}
  </button>
);

const InputsTable = () => (
  <table className="w-full flex-1 table-fixed border-collapse text-[10px] leading-4">
    <thead className="bg-white">
      <tr className="[&>th]:h-[15px] [&>th]:p-0 [&>th]:leading-[14px] [&>th]:font-normal">
        <th className="w-[236px] text-left"><span className="pl-[5px]">Variable</span></th>
        {["Value", "Start", "Step"].map((head) => (
          <th key={head} className="w-[118px] border-l border-[#dddbde] text-right"><span className="pr-[5px]">{head}</span></th>
        ))}
        <th className="border-l border-[#dddbde] text-right"><span className="pr-[5px]">Stop</span></th>
      </tr>
    </thead>
    <tbody>
      {inputRows.map((row, i) => (
        <tr
          key={row.name}
          className={clsx(
            "h-[19px] nth-[4n]:h-[18px]",
            row.selected ? "bg-[#3f9bfd] text-[#d8f6ff]" : i % 2 === 0 ? "bg-[#eceaed]" : "bg-white",
            "[&>td]:border-r [&>td]:border-b [&>td]:border-[#c8c6c9] [&>td]:p-0",
            row.disabled && "bg-white [&>td]:border-r-transparent",
          )}
        >
          <td>
            <label className="flex items-center gap-[5px] pl-[3px] whitespace-nowrap">
              <input
                type="checkbox"
                disabled={row.disabled}
                className={clsx(
                  "size-[11px] appearance-none border-t-2 border-l-2 border-[#4a484c] border-r border-b [border-right-color:#dddbde] [border-bottom-color:#dddbde]",
                  row.disabled ? "bg-[#c6c4c7]" : "bg-white",
                )}
              />
              {row.name}
            </label>
          </td>
          {row.cells.map((cell, c) => (
            <td key={c} className={clsx("whitespace-nowrap", row.text ? "text-left" : "text-right")}>
              <span className={row.text ? "pl-1" : "pr-[3px]"}>{cell}</span>
            </td>
          ))}
        </tr>
      ))}
    </tbody>
  </table>
);

const ScrollBar = () => (
  <div className="flex w-[15px] shrink-0 flex-col border-l border-[#dddbde] bg-white">
    <button type="button" aria-label="Scroll up" className="flex h-4 items-center justify-center border-b border-[#dddbde]">
      <svg width="8" height="5" viewBox="0 0 8 5" fill="none" stroke="#444" strokeWidth="1.200" aria-hidden="true"><path d="M.5 4.500L4 1l3.500 3.500" /></svg>
    </button>
    <div className="flex-1 pt-[35px]">
      <div className="flex h-[39px] flex-col items-center justify-center gap-px border border-[#a9a7aa] bg-[#dcdadd]">
        <span className="h-[2px] w-[7px] bg-[#555]" />
        <span className="h-[2px] w-[7px] bg-[#555]" />
        <span className="h-[2px] w-[7px] bg-[#555]" />
      </div>
    </div>
    <button type="button" aria-label="Scroll down" className="flex h-4 items-center justify-center border-y border-[#dddbde]">
      <svg width="8" height="5" viewBox="0 0 8 5" fill="none" stroke="#444" strokeWidth="1.200" aria-hidden="true"><path d="M.5.500L4 4 7.500.500" /></svg>
    </button>
  </div>
);

const InputsDialog = () => (
  <div role="dialog" aria-label="BufferTrading-EAv9.7" className="absolute top-[62px] left-[76px] z-10 w-[778px] border border-[#14303a] bg-[#70d3e9] px-[6px] pb-[6px] font-['Liberation_Sans',Arial,sans-serif] text-[10px]">
    <div className="relative flex h-7 items-center justify-center">
      <h2 className="font-['Open_Sans',sans-serif] text-[13px] leading-5">BufferTrading-EAv9.7</h2>
      <div className="absolute top-0 right-0 flex h-[19px] border border-t-0 border-[#1f4a55] font-bold">
        <button type="button" aria-label="Help" className="w-[25px] border-r border-[#1f4a55] text-[13px]">?</button>
        <button type="button" aria-label="Close" className="flex w-[43px] items-center justify-center bg-[#bb4c53]"><CloseGlyph size={8} weight={2.5} /></button>
      </div>
    </div>
    <div className="border border-[#dff3f8] bg-[#f3f1f4] px-1 pt-[6px]">
      <div className="flex h-[18px] items-end pl-px">
        <button type="button" className="h-4 w-[43px] border border-b-0 border-[#9b999c]">Testing</button>
        <button type="button" className="-mb-px h-[19px] w-[43px] border border-b-0 border-[#9b999c] bg-white pb-[2px]">Inputs</button>
        <button type="button" className="h-4 w-[62px] border border-b-0 border-l-0 border-[#9b999c]">Optimization</button>
      </div>
      <div className="border border-[#9b999c] bg-white pt-[9px] pr-[10px] pb-[11px] pl-[11px]">
        <div className="border border-[#77757a] p-px">
          <div className="flex">
            <div className="min-w-0 flex-1">
              <InputsTable />
              <div className="h-px bg-[#eceaed]" />
            </div>
            <ScrollBar />
          </div>
        </div>
        <div className="mt-[10px] flex justify-end gap-2">
          <DialogButton wide>Load</DialogButton>
          <DialogButton wide>Save</DialogButton>
        </div>
      </div>
      <div className="flex justify-end gap-[7px] pt-1 pr-1">
        <DialogButton primary>OK</DialogButton>
        <DialogButton>Cancel</DialogButton>
        <DialogButton>Reset</DialogButton>
      </div>
      <div className="flex h-[7px] justify-end">
        <svg width="8" height="7" viewBox="0 0 8 7" fill="#aaa8ab" aria-hidden="true"><path d="M6 0h1v1H6zM3 2h1v1H3zM6 2h1v1H6zM0 5h1v1H0zM3 5h1v1H3zM6 5h1v1H6z" /></svg>
      </div>
    </div>
    <svg width="12" height="20" viewBox="0 0 12 20" className="absolute top-[238px] left-[350px]" aria-hidden="true">
      <path d="M1 1v14l3.500-3 2.500 6.500 2.500-1L7 11.500h4z" fill="#fff" stroke="#111" />
    </svg>
  </div>
);

export default function App() {
  return (
    <div className="relative flex h-screen min-h-[720px] flex-col overflow-hidden border-x-2 border-black bg-[#f3f1f4] font-['Open_Sans',sans-serif] text-[11px] text-black">
      <TitleBar />
      <MenuBar />
      <Toolbars />
      <div className="flex min-h-0 flex-1">
        <Navigator />
        <Chart />
      </div>
      <Tester />
      <StatusBar />
      <Taskbar />
      <InputsDialog />
      <RemoteBar />
      <RecorderBar />
    </div>
  );
}
